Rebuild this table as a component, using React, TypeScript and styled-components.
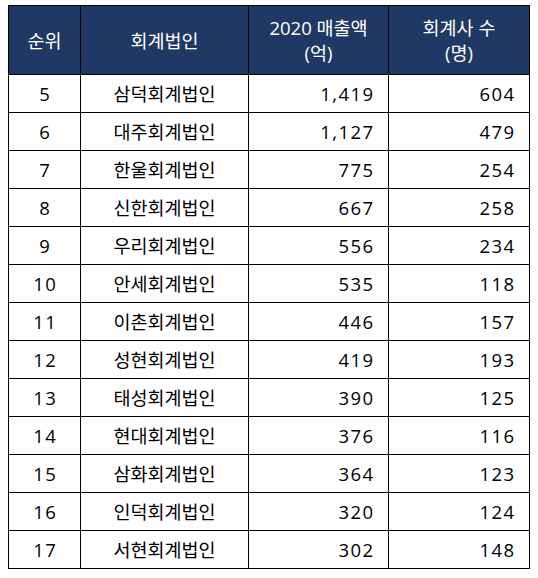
import React, { FC } from "react";
import styled, { createGlobalStyle } from "styled-components";

type Firm = { rank: number; name: string; sales: string; staff: number };

const firms: Firm[] = [
  { rank: 5, name: "삼덕회계법인", sales: "1,419", staff: 604 },
  { rank: 6, name: "대주회계법인", sales: "1,127", staff: 479 },
  { rank: 7, name: "한울회계법인", sales: "775", staff: 254 },
  { rank: 8, name: "신한회계법인", sales: "667", staff: 258 },
  { rank: 9, name: "우리회계법인", sales: "556", staff: 234 },
  { rank: 10, name: "안세회계법인", sales: "535", staff: 118 },
  { rank: 11, name: "이촌회계법인", sales: "446", staff: 157 },
  { rank: 12, name: "성현회계법인", sales: "419", staff: 193 },
  { rank: 13, name: "태성회계법인", sales: "390", staff: 125 },
  { rank: 14, name: "현대회계법인", sales: "376", staff: 116 },
  { rank: 15, name: "삼화회계법인", sales: "364", staff: 123 },
  { rank: 16, name: "인덕회계법인", sales: "320", staff: 124 },
  { rank: 17, name: "서현회계법인", sales: "302", staff: 148 },
];

const GlobalStyle = createGlobalStyle`
  body {
    margin: 0;
    background: #ffffff;
    font-family: "Open Sans", "Noto Sans CJK KR", sans-serif;
  }
`;

const App: FC = () => {
  return (
    <>
      <GlobalStyle />
      <Table>
        <colgroup>
          <col style={{ width: "72px" }} />
          <col style={{ width: "168px" }} />
          <col style={{ width: "140px" }} />
          <col style={{ width: "141px" }} />
        </colgroup>
        <thead>
          <tr>
            <HeadCell>순위</HeadCell>
            <HeadCell>회계법인</HeadCell>
            <HeadCell>
              2020 매출액
              <br />
              (억)
            </HeadCell>
            <HeadCell>
              회계사 수
              <br />
              (명)
            </HeadCell>
          </tr>
        </thead>
        <tbody>
          {firms.map((item) => (
            <tr key={item.rank}>
              <NumberCell align="center">{item.rank}</NumberCell>
              <Cell align="center">{item.name}</Cell>
              <NumberCell align="right">{item.sales}</NumberCell>
              <NumberCell align="right">{item.staff}</NumberCell>
            </tr>
          ))}
        </tbody>
      </Table>
    </>
  );
};

const Table = styled.table`
  margin: 5px 0 0 8px;
  width: 521px;
  table-layout: fixed;
  border-collapse: collapse;
  border: 1.5px solid #000000;
`;

const HeadCell = styled.th`
  height: 69px;
  padding: 0 4px;
  box-sizing: border-box;
  background-color: #203864;
  color: #ffffff;
  font-weight: 400;
  font-size: 18.5px;
  line-height: 25px;
  text-align: center;
  vertical-align: middle;
  border: 1.5px solid #000000;
`;

const Cell = styled.td<{ align: "center" | "right" }>`
  height: 38px;
  box-sizing: border-box;
  color: #000000;
  font-size: 18.5px;
  line-height: 22px;
  text-align: ${(p) => p.align};
  padding: 0 4px;
  vertical-align: middle;
  border: 1.5px solid #000000;
`;

const NumberCell = styled(Cell)`
  letter-spacing: 1.4px;
  padding: 0 ${(p) => (p.align === "right" ? "13.6px" : "4px")} 0 5.4px;
`;

export default App;
